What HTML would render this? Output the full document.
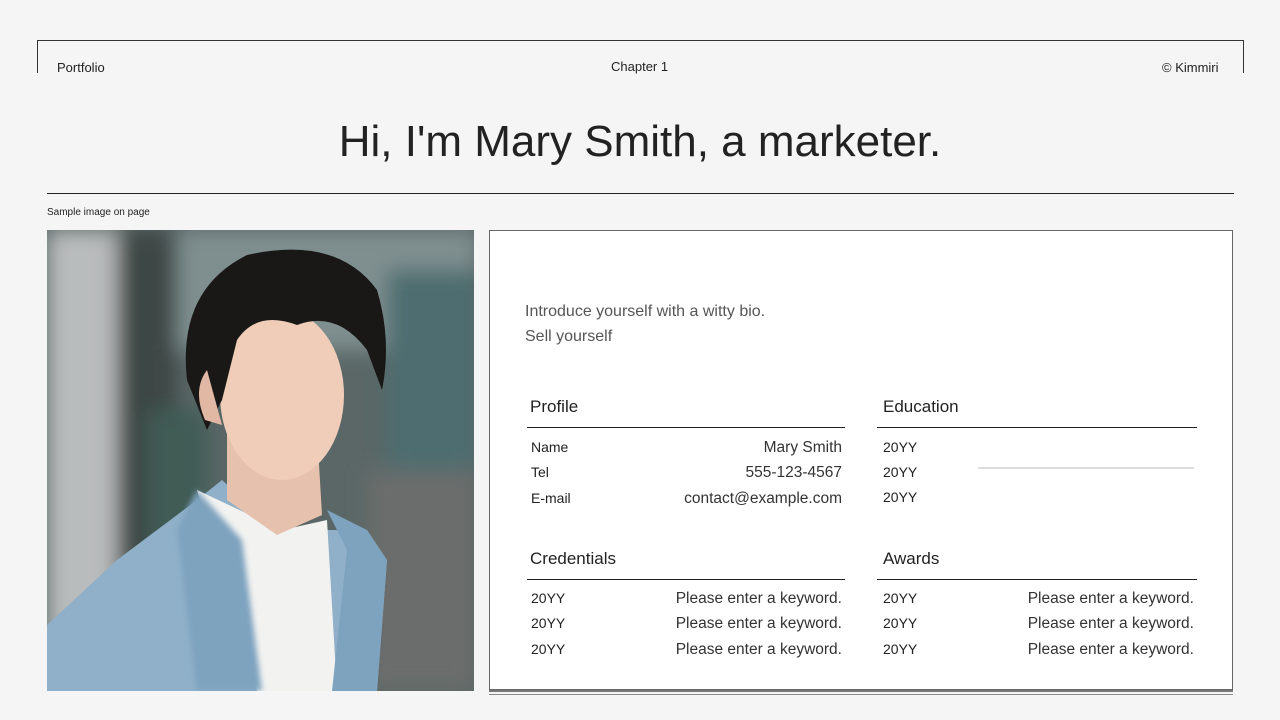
<!DOCTYPE html>
<html><head><meta charset="utf-8"><style>
*{margin:0;padding:0;box-sizing:border-box}
body{width:1280px;height:720px;background:#f5f5f5;font-family:"Liberation Sans",sans-serif;color:#222;position:relative;overflow:hidden}
.a{position:absolute}
.hdr{left:37px;top:40px;width:1207px;height:33px;border:1px solid #333;border-bottom:none}
.row{position:absolute;font-size:15.5px;color:#222;display:flex;justify-content:space-between}
.row span:last-child{color:#333}
.line{position:absolute;height:1px;background:#222}
</style></head><body>
<div class="a hdr"></div>
<div class="a" style="left:57px;top:60px;font-size:13px">Portfolio</div>
<div class="a" style="left:611px;top:59px;font-size:13px">Chapter 1</div>
<div class="a" style="left:1162px;top:60px;font-size:13px">© Kimmiri</div>
<div class="a" style="left:0;width:1280px;top:117px;text-align:center;font-size:44px;color:#222">Hi, I'm Mary Smith, a marketer.</div>
<div class="line" style="left:47px;top:193px;width:1187px"></div>
<div class="a" style="left:47px;top:207px;font-size:10px">Sample image on page</div>
<svg class="a" style="left:47px;top:230px" width="427" height="461" viewBox="0 0 427 461">
<defs><filter id="b"><feGaussianBlur stdDeviation="10"/></filter><filter id="s"><feGaussianBlur stdDeviation="3"/></filter></defs>
<rect width="427" height="461" fill="#5a6766"/>
<g filter="url(#b)">
<rect x="0" y="0" width="70" height="461" fill="#b9bcbc"/>
<rect x="70" y="0" width="60" height="461" fill="#3c4644"/>
<rect x="130" y="0" width="300" height="120" fill="#7f8f90"/>
<rect x="340" y="40" width="90" height="200" fill="#4d6d6f"/>
<rect x="320" y="240" width="110" height="221" fill="#6a6d6c"/>
<rect x="100" y="180" width="60" height="200" fill="#3f5b55"/>
</g>
<path d="M0 395 L70 330 L150 270 L175 250 L230 300 L275 300 L320 300 L340 330 L330 461 L0 461Z" fill="#8fb0c8"/>
<path d="M150 260 L210 461 L290 461 L280 290 L235 300Z" fill="#f2f2f0"/>
<path d="M150 260 L195 310 L215 461 L150 461 L130 300Z" fill="#7ea3bf" filter="url(#s)"/>
<path d="M280 280 L300 320 L285 461 L330 461 L340 330 L320 300Z" fill="#7ea3bf"/>
<path d="M180 200 L180 270 L230 305 L275 285 L270 200Z" fill="#e6c1ad"/>
<ellipse cx="235" cy="165" rx="62" ry="85" fill="#f0cdb9"/>
<path d="M140 150 Q130 60 200 25 Q290 5 330 60 Q345 110 335 160 L320 120 Q290 80 250 95 Q210 80 190 110 L175 170 L160 200Z" fill="#1a1817"/>
<path d="M160 140 Q145 160 158 190 L175 195Z" fill="#e0b8a4"/>
</svg>
<div class="a" style="left:489px;top:230px;width:744px;height:460px;background:#fff;border:1px solid #666"></div>
<div class="a" style="left:489px;top:690px;width:744px;height:5px;border-top:2px solid #777;border-bottom:1px solid #888"></div>
<div class="a" style="left:525px;top:299px;font-size:16px;color:#555;line-height:25px">Introduce yourself with a witty bio.<br>Sell yourself</div>

<div class="a" style="left:530px;top:397px;font-size:17px">Profile</div>
<div class="line" style="left:527px;top:427px;width:318px"></div>
<div class="row" style="left:531px;top:439px;width:311px"><span style="font-size:14px">Name</span><span>Mary Smith</span></div>
<div class="row" style="left:531px;top:464px;width:311px"><span style="font-size:14px">Tel</span><span>555-123-4567</span></div>
<div class="row" style="left:531px;top:490px;width:311px"><span style="font-size:14px">E-mail</span><span>contact@example.com</span></div>

<div class="a" style="left:883px;top:397px;font-size:17px">Education</div>
<div class="line" style="left:877px;top:427px;width:320px"></div>
<div class="row" style="left:883px;top:439px;width:311px"><span style="font-size:14px">20YY</span><span></span></div>
<div class="row" style="left:883px;top:464px;width:311px"><span style="font-size:14px">20YY</span><span></span></div>
<div class="a" style="left:978px;top:467px;width:216px;height:2px;background:#ddd"></div>
<div class="row" style="left:883px;top:489px;width:311px"><span style="font-size:14px">20YY</span><span></span></div>

<div class="a" style="left:530px;top:549px;font-size:17px">Credentials</div>
<div class="line" style="left:527px;top:579px;width:318px"></div>
<div class="row" style="left:531px;top:590px;width:311px"><span style="font-size:14px">20YY</span><span>Please enter a keyword.</span></div>
<div class="row" style="left:531px;top:615px;width:311px"><span style="font-size:14px">20YY</span><span>Please enter a keyword.</span></div>
<div class="row" style="left:531px;top:641px;width:311px"><span style="font-size:14px">20YY</span><span>Please enter a keyword.</span></div>

<div class="a" style="left:883px;top:549px;font-size:17px">Awards</div>
<div class="line" style="left:877px;top:579px;width:320px"></div>
<div class="row" style="left:883px;top:590px;width:311px"><span style="font-size:14px">20YY</span><span>Please enter a keyword.</span></div>
<div class="row" style="left:883px;top:615px;width:311px"><span style="font-size:14px">20YY</span><span>Please enter a keyword.</span></div>
<div class="row" style="left:883px;top:641px;width:311px"><span style="font-size:14px">20YY</span><span>Please enter a keyword.</span></div>
</body></html>
